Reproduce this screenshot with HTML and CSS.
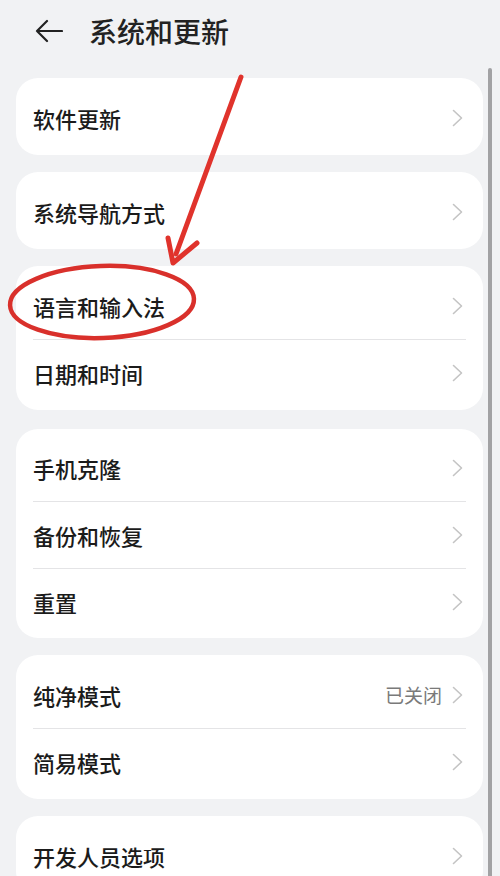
FILE: index.html
```html
<!DOCTYPE html>
<html lang="zh-CN">
<head>
<meta charset="utf-8">
<title>系统和更新</title>
<link rel="stylesheet" href="styles.css">
</head>
<body>
<div class="page">
  <header class="topbar">
    <svg class="back" viewBox="0 0 28 24" width="28" height="24"><path d="M27 12H2M12 2L2 12l10 10" fill="none" stroke="#222" stroke-width="2.2" stroke-linecap="round" stroke-linejoin="round"/></svg>
    <h1 class="title">系统和更新</h1>
  </header>

  <main class="list">
    <section class="card">
      <div class="row"><span class="label">软件更新</span><svg class="chev" viewBox="0 0 11 18" width="11" height="18"><path d="M1.5 1.5L9.5 9L1.5 16.5" /></svg></div>
    </section>
    <section class="card">
      <div class="row"><span class="label">系统导航方式</span><svg class="chev" viewBox="0 0 11 18" width="11" height="18"><path d="M1.5 1.5L9.5 9L1.5 16.5" /></svg></div>
    </section>
    <section class="card">
      <div class="row"><span class="label">语言和输入法</span><svg class="chev" viewBox="0 0 11 18" width="11" height="18"><path d="M1.5 1.5L9.5 9L1.5 16.5" /></svg></div>
      <div class="row"><span class="label">日期和时间</span><svg class="chev" viewBox="0 0 11 18" width="11" height="18"><path d="M1.5 1.5L9.5 9L1.5 16.5" /></svg></div>
    </section>
    <section class="card card-tall">
      <div class="row"><span class="label">手机克隆</span><svg class="chev" viewBox="0 0 11 18" width="11" height="18"><path d="M1.5 1.5L9.5 9L1.5 16.5" /></svg></div>
      <div class="row"><span class="label">备份和恢复</span><svg class="chev" viewBox="0 0 11 18" width="11" height="18"><path d="M1.5 1.5L9.5 9L1.5 16.5" /></svg></div>
      <div class="row"><span class="label">重置</span><svg class="chev" viewBox="0 0 11 18" width="11" height="18"><path d="M1.5 1.5L9.5 9L1.5 16.5" /></svg></div>
    </section>
    <section class="card">
      <div class="row"><span class="label">纯净模式</span><span class="value">已关闭</span><svg class="chev" viewBox="0 0 11 18" width="11" height="18"><path d="M1.5 1.5L9.5 9L1.5 16.5" /></svg></div>
      <div class="row"><span class="label">简易模式</span><svg class="chev" viewBox="0 0 11 18" width="11" height="18"><path d="M1.5 1.5L9.5 9L1.5 16.5" /></svg></div>
    </section>
    <section class="card">
      <div class="row"><span class="label">开发人员选项</span><svg class="chev" viewBox="0 0 11 18" width="11" height="18"><path d="M1.5 1.5L9.5 9L1.5 16.5" /></svg></div>
    </section>
  </main>

  <div class="scrollbar"></div>

  <svg class="annotation" viewBox="0 0 500 876" width="500" height="876">
    <ellipse cx="102" cy="302" rx="92" ry="36" transform="rotate(-2 102 302)" fill="none" stroke="#d9302b" stroke-width="4.5"/>
    <line x1="241" y1="77" x2="176" y2="254" stroke="#e0332c" stroke-width="5" stroke-linecap="round"/>
    <path d="M168 238 L173 263 L197 243" fill="none" stroke="#e0332c" stroke-width="5" stroke-linecap="round" stroke-linejoin="round"/>
  </svg>
</div>
</body>
</html>
```

FILE: styles.css
```css
* { box-sizing: border-box; }
html, body { margin: 0; padding: 0; }
body {
  background: #f1f2f4;
  font-family: "Noto Sans CJK SC", "Noto Sans", sans-serif;
  color: #1b1b1b;
}
.page {
  position: relative;
  width: 500px;
  height: 876px;
  overflow: hidden;
}
.topbar {
  height: 78px;
  display: flex;
  align-items: center;
  padding: 0 0 16px 35px;
  gap: 26px;
}
.back { display: block; }
.title {
  margin: 0;
  font-size: 28px;
  font-weight: 500;
  line-height: 1;
  color: #222;
}
.list {
  display: flex;
  flex-direction: column;
  gap: 17px;
  padding: 0 17px 0 16px;
}
.card {
  background: #fff;
  border-radius: 22px;
  padding: 6px 0 4px;
}
.card-tall { margin-top: 2px; padding: 5px 0 3px; }
.row {
  height: 67px;
  display: flex;
  align-items: center;
  margin: 0 17px;
}
.row + .row { border-top: 1px solid #e4e4e6; }
.label {
  flex: 1;
  font-size: 22px;
  font-weight: 500;
  line-height: 1;
}
.value {
  font-size: 19px;
  color: #7a7a7a;
  margin-right: 10px;
  line-height: 1;
}
.chev {
  display: block;
  fill: none;
  stroke: #c4c4c4;
  stroke-width: 1.6;
  stroke-linecap: round;
  stroke-linejoin: round;
  margin-right: 3px;
}
.scrollbar {
  position: absolute;
  left: 488px;
  top: 68px;
  width: 4px;
  height: 820px;
  border-radius: 2px;
  background: #a2a2a4;
}
.annotation {
  position: absolute;
  left: 0;
  top: 0;
  pointer-events: none;
}
```
